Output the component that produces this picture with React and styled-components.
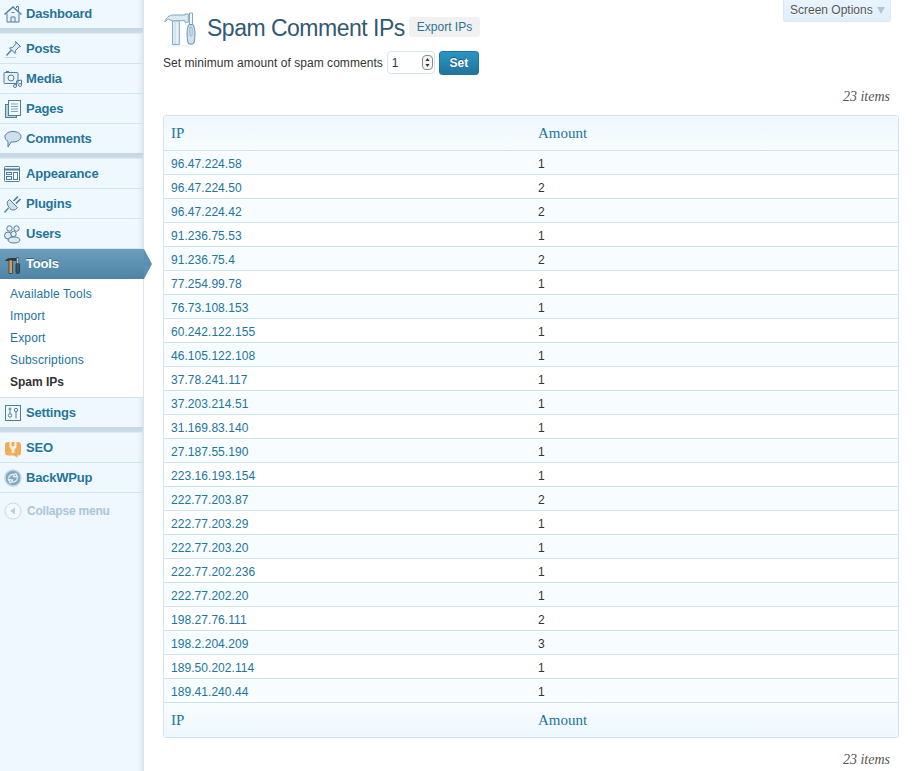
import React from 'react'
import styled, { createGlobalStyle } from 'styled-components'

const GlobalStyle = createGlobalStyle`
  html, body {
    margin: 0;
    padding: 0;
    height: 100%;
    overflow: hidden;
    background: #fff;
    font-family: "Liberation Sans", Arial, sans-serif;
    font-size: 12px;
    color: #333;
  }
  #root { height: 100%; }
`

const Page = styled.div`
  display: flex;
  height: 771px;
  overflow: hidden;
`

const Sidebar = styled.nav`
  flex: 0 0 144px;
  width: 144px;
  background: linear-gradient(to right, #eff7ff 0, #eff7ff 137px, #e6eef6 141px, #d9e3ec 144px);
`

const MenuList = styled.ul`
  list-style: none;
  margin: 0;
  padding: 0;
`

const MenuItem = styled.li`
  display: flex;
  align-items: center;
  height: ${p => p.$first ? 27 : 29}px;
  border-bottom: 1px solid #cfe4f7;
  padding-bottom: ${p => p.$first ? 1 : 0}px;
  font-size: 13px;
  font-weight: 700;
  letter-spacing: -0.2px;
  color: #21759b;
  text-shadow: 0 1px 0 #fff;
  margin-right: 1px;
`

const IconSlot = styled.span`
  flex: 0 0 26px;
  width: 26px;
  height: 20px;
  display: flex;
  justify-content: center;
  align-items: center;
  svg { display: block; }
`

const Separator = styled.li`
  height: 6px;
  margin: -1px 1px 0 0;
  box-sizing: border-box;
  background: linear-gradient(to bottom, #c2d6e4, #cddde9);
  border-bottom: 1px solid #dfe9f2;
`

const ActiveItem = styled.li`
  position: relative;
  display: flex;
  align-items: center;
  box-sizing: border-box;
  height: 30px;
  padding-bottom: 1px;
  background: linear-gradient(to bottom, #6d9ebb, #4d84a6);
  font-size: 13px;
  font-weight: 700;
  letter-spacing: -0.2px;
  color: #fff;
  text-shadow: 0 -1px 0 #3a6a88;

  &::after {
    content: '';
    position: absolute;
    left: 144px;
    top: 0;
    border-style: solid;
    border-width: 15px 0 15px 8px;
    border-color: transparent transparent transparent #5b90b0;
  }
`

const SubMenu = styled.ul`
  list-style: none;
  margin: 0 1px 0 0;
  padding: 4px 0 0;
  height: 119px;
  box-sizing: border-box;
  background: #fff;
  border-bottom: 1px solid #cfe0e8;
`

const SubItem = styled.li`
  height: 22px;
  line-height: 22px;
  padding-left: 10px;
  font-size: 12px;
  letter-spacing: ${p => p.$current ? 0 : 0.15}px;
  color: ${p => p.$current ? '#333' : '#21759b'};
  font-weight: ${p => p.$current ? 700 : 400};
`

const CollapseRow = styled.li`
  display: flex;
  align-items: center;
  height: 36px;
  padding-left: 4px;
  gap: 5px;
  font-size: 12px;
  font-weight: 700;
  letter-spacing: -0.2px;
  color: #a9c6da;
`

const Main = styled.main`
  flex: 1;
  min-width: 0;
  padding: 0 14px 0 19px;
`

const ScreenOptions = styled.button`
  position: absolute;
  top: 0;
  right: 22px;
  width: 108px;
  height: 22px;
  padding: 0 0 2px 6px;
  display: flex;
  align-items: center;
  gap: 4px;
  border: 1px solid #d9e9f7;
  border-top: 0;
  border-radius: 0 0 3px 3px;
  background: linear-gradient(to bottom, #e9f4fd, #dfeefb);
  color: #555;
  font: 12px "Liberation Sans", Arial, sans-serif;
  text-shadow: 0 1px 0 #fff;
`

const ArrowDown = styled.span`
  width: 0;
  height: 0;
  margin-top: 2px;
  border-style: solid;
  border-width: 7px 4px 0;
  border-color: #b4c4d2 transparent transparent;
`

const TitleRow = styled.header`
  display: flex;
  align-items: center;
  height: 38px;
  padding-top: 10px;
  gap: 4px;
`

const Title = styled.h1`
  margin: 0 0 2px 4px;
  font-size: 23px;
  font-weight: 400;
  letter-spacing: -0.5px;
  color: #2f5a72;
`

const ExportButton = styled.a`
  display: inline-block;
  margin-bottom: 4px;
  padding: 0 8px;
  height: 20px;
  line-height: 20px;
  border-radius: 3px;
  background: #f1f1f1;
  font-size: 12px;
  color: #2a7296;
`

const FilterForm = styled.form`
  display: flex;
  align-items: center;
  height: 25px;
  margin: 2px 0 0;
  font-size: 12px;
  letter-spacing: 0.05px;
  color: #333;
`

const SpinBox = styled.div`
  display: flex;
  align-items: center;
  justify-content: space-between;
  box-sizing: border-box;
  width: 48px;
  height: 23px;
  margin-left: 4px;
  padding: 0 1px 0 4px;
  border: 1px solid #d5e6f2;
  border-radius: 4px;
  background: #fff;
`

const SetButton = styled.button`
  width: 40px;
  height: 24px;
  margin-left: 4px;
  padding: 0;
  border: 1px solid #21759b;
  border-radius: 3px;
  background: linear-gradient(to bottom, #2a95c5, #21759b);
  color: #fff;
  font: 700 12px "Liberation Sans", Arial, sans-serif;
  text-shadow: 0 -1px 0 #1a5b79;
`

const ItemCount = styled.div`
  text-align: right;
  padding-right: 9px;
  font-family: "Liberation Serif", Georgia, serif;
  font-style: italic;
  font-size: 14px;
  color: #555;
  height: ${p => p.$height}px;
  line-height: ${p => p.$lh}px;
`

const Table = styled.table`
  width: 736px;
  table-layout: fixed;
  border-collapse: separate;
  border-spacing: 0;
  border: 1px solid #d1e3ee;
  border-radius: 3px;
  overflow: hidden;
`

const HeadCell = styled.th`
  height: 33px;
  padding: 1px 7px 0;
  text-align: left;
  font-family: "Liberation Serif", Georgia, serif;
  font-size: 15px;
  font-weight: 400;
  color: #21759b;
  background: ${p => p.$foot
    ? 'linear-gradient(to bottom, #f7fcfe, #eff7ff)'
    : 'linear-gradient(to bottom, #eff7ff, #f7fcfe)'};
  border-bottom: ${p => p.$foot ? 0 : '1px solid #d1e3ee'};
`

const Row = styled.tr`
  background: ${p => p.$alt ? '#f7fcfe' : '#fff'};
`

const Cell = styled.td`
  height: 21px;
  padding: 2px 7px 0;
  font-size: 12px;
  letter-spacing: 0.05px;
  color: ${p => p.$link ? '#21759b' : '#333'};
  border-bottom: 1px solid #d1e3ee;
`

const STROKE = '#4f7f9c'

const HomeIcon = () => (
  <svg width="20" height="20" viewBox="0 0 20 20" fill="none" stroke={STROKE} strokeWidth="1">
    <path d="M4 9.500V18h12V9.500" fill="#eaf2f8" />
    <path d="M1.500 10.500 10 3l8.500 7.500" strokeWidth="1.500" />
    <path d="M8 18v-5h4v5M8.500 8.500h3" />
    <path d="M13.500 4v-1.500h2V7" />
  </svg>
)

const PinIcon = () => (
  <svg width="20" height="20" viewBox="0 0 20 20" fill="none" stroke={STROKE} strokeWidth="1">
    <path d="M12.500 2.500l5 5-1.500.5-3.500 3.500-.5 3-5.500-5.500 3-.5L13 4.500z" fill="#dfeaf3" />
    <path d="M8.500 11 3.500 16.500" strokeWidth="1.300" />
    <path d="M2 18.500h11" stroke="#c8d4dd" />
  </svg>
)

const MediaIcon = () => (
  <svg width="20" height="20" viewBox="0 0 20 20" fill="none" stroke={STROKE} strokeWidth="1">
    <rect x="1" y="3.500" width="14" height="11" rx="1" fill="#eaf1f7" />
    <circle cx="8" cy="9" r="3" />
    <path d="M3 2.500h3" />
    <circle cx="12" cy="17" r="1.500" fill="#fff" />
    <circle cx="17" cy="16" r="1.500" fill="#fff" />
    <path d="M13.500 17v-5l5-1v5" />
  </svg>
)

const PagesIcon = () => (
  <svg width="20" height="20" viewBox="0 0 20 20" fill="none" stroke={STROKE} strokeWidth="1">
    <rect x="2.500" y="5.500" width="11" height="13" fill="#b9d0df" />
    <rect x="5.500" y="1.500" width="12" height="15" fill="#f3f8fb" />
    <path d="M8 5h7M8 7.500h7M8 10h7M8 12.500h7" stroke="#7ea5bd" />
  </svg>
)

const CommentIcon = () => (
  <svg width="20" height="20" viewBox="0 0 20 20" fill="none" stroke={STROKE} strokeWidth="1">
    <path d="M10 2.500c4.500 0 8 2.200 8 5.200s-3.500 5.300-8 5.300c-.7 0-1.300 0-1.900-.1L5 18v-5.600C3 11.400 2 9.700 2 7.700c0-3 3.500-5.200 8-5.200z" fill="#cfe0ec" />
  </svg>
)

const AppearanceIcon = () => (
  <svg width="20" height="20" viewBox="0 0 20 20" fill="none" stroke={STROKE} strokeWidth="1">
    <rect x="1.500" y="2.500" width="15" height="15" rx="1" fill="#f3f8fb" />
    <path d="M1.500 5.500h15" strokeWidth="2" />
    <rect x="3.500" y="8.500" width="5" height="2" />
    <rect x="3.500" y="12.500" width="5" height="3" />
    <rect x="10.500" y="8.500" width="4" height="7" />
  </svg>
)

const PluginIcon = () => (
  <svg width="20" height="20" viewBox="0 0 20 20" fill="none" stroke={STROKE} strokeWidth="1">
    <path d="M6.500 5.500l8 8-2 2c-2 1-4 .5-5.500-1S3.500 10 4.500 7.500z" fill="#cfe0ec" />
    <path d="M10.500 7l4.500-4.500M13 9.500l4.500-4.500" strokeWidth="1.700" />
    <path d="M5.500 14 1.500 18.500" strokeWidth="1.300" />
  </svg>
)

const UsersIcon = () => (
  <svg width="20" height="20" viewBox="0 0 20 20" fill="none" stroke={STROKE} strokeWidth="1">
    <circle cx="6.500" cy="4.500" r="2.700" fill="#eaf1f7" />
    <circle cx="13.500" cy="4.500" r="2.700" fill="#eaf1f7" />
    <ellipse cx="5" cy="11.500" rx="3.500" ry="3.500" fill="#dfeaf3" />
    <circle cx="10.500" cy="10" r="2.700" fill="#eaf1f7" />
    <ellipse cx="11" cy="16" rx="6" ry="3" fill="#dfeaf3" />
  </svg>
)

const ToolsSmallIcon = () => (
  <svg width="20" height="20" viewBox="0 0 20 20" fill="none">
    <path d="M2 7c1-2 3-3 5-3h6.500v3H9z" fill="#2f3a42" />
    <rect x="6" y="6" width="3.500" height="13.500" fill="#d99a62" stroke="#333" strokeWidth=".7" />
    <rect x="13" y="9" width="3.500" height="10.500" rx="1.500" fill="#33566d" stroke="#1d2b34" strokeWidth=".7" />
    <rect x="14" y="3.500" width="1.500" height="6" fill="#e8eef2" stroke="#333" strokeWidth=".5" />
  </svg>
)

const SettingsIcon = () => (
  <svg width="20" height="20" viewBox="0 0 20 20" fill="none" stroke={STROKE} strokeWidth="1">
    <rect x="2.500" y="2.500" width="15" height="15" fill="#f3f8fb" />
    <circle cx="7" cy="12.500" r="1.700" />
    <circle cx="13" cy="7" r="1.700" />
    <path d="M7 4.500v6.200M13 8.700v6.800M5.500 6h3" />
  </svg>
)

const SeoIcon = () => (
  <svg width="20" height="20" viewBox="0 0 20 20">
    <path d="M5 4h10c2 0 3 1 3 3v7.500c0 2-1 3-3 3h-1l1 2.500-4-2.500H5c-2 0-3-1-3-3V7c0-2 1-3 3-3z" fill="#f2ab5b" />
    <path d="M6.500 4h2v3a1.500 1.500 0 0 0 3 0V4h2v5l-2 2.500V15h-3v-3.500l-2-2.500z" fill="#fbf3e6" />
  </svg>
)

const GlobeIcon = () => (
  <svg width="20" height="20" viewBox="0 0 20 20" fill="none">
    <circle cx="10" cy="10" r="8" fill="#7fa9c3" stroke="#c4d7e4" strokeWidth="1.500" />
    <path d="M5.500 10.500c.5-3 3-4.500 6-4l-1 2 4 .5-2-4" stroke="#e8f0f6" strokeWidth="1.300" />
    <path d="M14.500 10c-.5 3-3 4.500-6 4l1-2-4-.5 2 4" stroke="#e8f0f6" strokeWidth="1.300" />
  </svg>
)

const CollapseIcon = () => (
  <svg width="18" height="18" viewBox="0 0 18 18">
    <circle cx="9" cy="9" r="8" fill="#f4f9fd" stroke="#c7dbe9" />
    <path d="M11 5.500v7L6 9z" fill="#b9d0e0" />
  </svg>
)

const HeaderToolsIcon = () => (
  <svg width="36" height="36" viewBox="0 0 36 36" fill="none" stroke="#7eaac6" strokeWidth="1">
    <path d="M1.700 10.700C3 7 6 4 10.300 4H22V3h3.300v8.300H22V9.700h-5.700v.3H9.300L5.300 8z" fill="#dbe9f2" />
    <path d="M9.500 10h6.800v23.500H9.500z" fill="#e8f1f7" />
    <path d="M12 10v23" stroke="#b9d3e3" />
    <path d="M26.500 2h3v12h-3z" fill="#f3f8fb" />
    <path d="M25.500 14c0-.5 5-.5 5 0 1 3 1.500 6 1.500 9 0 3-.5 6-1 9-.5 1.500-5.500 1.500-6 0-.5-3-1-6-1-9 0-3 .5-6 1.500-9z" fill="#cfe2ee" stroke="#5f93b4" />
    <rect x="27" y="16" width="2" height="9" rx="1" fill="#fff" />
    <path d="M4 35h20" stroke="#e4edf3" />
  </svg>
)

const SpinnerIcon = () => (
  <svg width="11" height="15" viewBox="0 0 11 15">
    <rect x=".5" y=".5" width="10" height="14" rx="3.500" fill="#f4f4f4" stroke="#8a8a8a" />
    <path d="M5.500 3 7.500 6h-4zM5.500 12 3.500 9h4z" fill="#333" />
  </svg>
)

const dashboardItem = { label: 'Dashboard', icon: <HomeIcon />, first: true }

const contentItems = [
  { label: 'Posts', icon: <PinIcon /> },
  { label: 'Media', icon: <MediaIcon /> },
  { label: 'Pages', icon: <PagesIcon /> },
  { label: 'Comments', icon: <CommentIcon /> },
]

const adminItems = [
  { label: 'Appearance', icon: <AppearanceIcon /> },
  { label: 'Plugins', icon: <PluginIcon /> },
  { label: 'Users', icon: <UsersIcon /> },
]

const subItems = ['Available Tools', 'Import', 'Export', 'Subscriptions']

const rows = [
  ['96.47.224.58', 1], ['96.47.224.50', 2], ['96.47.224.42', 2], ['91.236.75.53', 1],
  ['91.236.75.4', 2], ['77.254.99.78', 1], ['76.73.108.153', 1], ['60.242.122.155', 1],
  ['46.105.122.108', 1], ['37.78.241.117', 1], ['37.203.214.51', 1], ['31.169.83.140', 1],
  ['27.187.55.190', 1], ['223.16.193.154', 1], ['222.77.203.87', 2], ['222.77.203.29', 1],
  ['222.77.203.20', 1], ['222.77.202.236', 1], ['222.77.202.20', 1], ['198.27.76.111', 2],
  ['198.2.204.209', 3], ['189.50.202.114', 1], ['189.41.240.44', 1],
]

const renderItem = item => (
  <MenuItem key={item.label} $first={item.first}>
    <IconSlot>{item.icon}</IconSlot>
    {item.label}
  </MenuItem>
)

const App = () => {
  return (
    <Page>
      <GlobalStyle />
      <Sidebar>
        <MenuList>
          {renderItem(dashboardItem)}
          <Separator />
          {contentItems.map(renderItem)}
          <Separator />
          {adminItems.map(renderItem)}
          <ActiveItem>
            <IconSlot><ToolsSmallIcon /></IconSlot>
            Tools
          </ActiveItem>
          <SubMenu>
            {subItems.map(label => <SubItem key={label}>{label}</SubItem>)}
            <SubItem $current>Spam IPs</SubItem>
          </SubMenu>
          {renderItem({ label: 'Settings', icon: <SettingsIcon /> })}
          <Separator />
          {renderItem({ label: 'SEO', icon: <SeoIcon /> })}
          {renderItem({ label: 'BackWPup', icon: <GlobeIcon /> })}
          <CollapseRow>
            <CollapseIcon />
            Collapse menu
          </CollapseRow>
        </MenuList>
      </Sidebar>
      <Main>
        <ScreenOptions>
          Screen Options
          <ArrowDown />
        </ScreenOptions>
        <TitleRow>
          <HeaderToolsIcon />
          <Title>Spam Comment IPs</Title>
          <ExportButton>Export IPs</ExportButton>
        </TitleRow>
        <FilterForm>
          Set minimum amount of spam comments
          <SpinBox>
            1
            <SpinnerIcon />
          </SpinBox>
          <SetButton type="button">Set</SetButton>
        </FilterForm>
        <ItemCount $height={40} $lh={44}>23 items</ItemCount>
        <Table>
          <thead>
            <tr>
              <HeadCell>IP</HeadCell>
              <HeadCell>Amount</HeadCell>
            </tr>
          </thead>
          <tbody>
            {rows.map(([ip, amount], i) => (
              <Row key={ip} $alt={i % 2 === 0}>
                <Cell $link>{ip}</Cell>
                <Cell>{amount}</Cell>
              </Row>
            ))}
          </tbody>
          <tfoot>
            <tr>
              <HeadCell $foot>IP</HeadCell>
              <HeadCell $foot>Amount</HeadCell>
            </tr>
          </tfoot>
        </Table>
        <ItemCount $height={33} $lh={44}>23 items</ItemCount>
      </Main>
    </Page>
  )
}

export default App
